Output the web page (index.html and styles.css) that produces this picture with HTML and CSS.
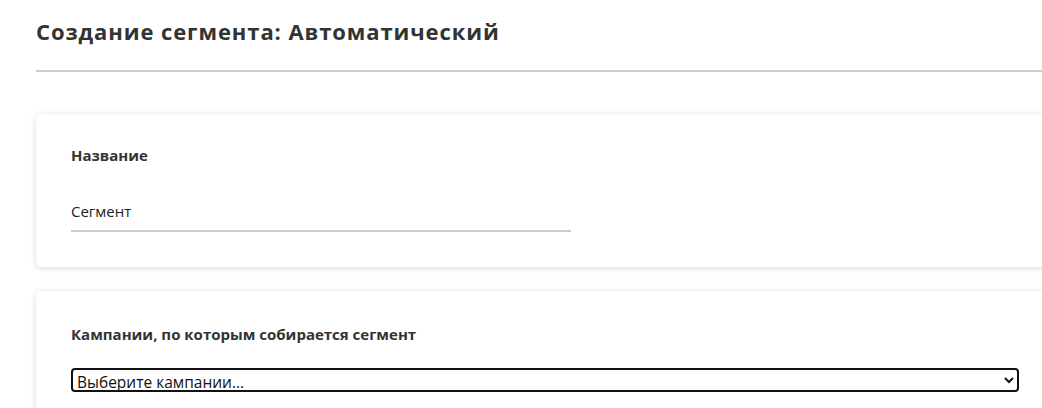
FILE: index.html
```html
<!DOCTYPE html>
<html lang="ru">
<head>
    <meta charset="UTF-8">
    <meta name="viewport" content="width=device-width, initial-scale=1.0">
    <title>Создание сегмента</title>
    <link rel="stylesheet" href="styles.css">
</head>
<body>
    <div class="page">
        <h1 class="page-title">Создание сегмента: Автоматический</h1>
        <hr class="divider">

        <!-- Название -->
        <div class="card">
            <div class="field-label">Название</div>
            <input class="text-input" type="text" value="Сегмент">
        </div>

        <!-- Кампании -->
        <div class="card card-campaigns">
            <div class="field-label">Кампании, по которым собирается сегмент</div>
            <select class="select-input">
                <option>Выберите кампании...</option>
            </select>
        </div>
    </div>
</body>
</html>
```

FILE: styles.css
```css
body {
    font-family: "Open Sans", Arial, sans-serif;
    margin: 0;
    padding: 0;
    overflow: hidden;
    background-color: white;
    color: #333;
}

.page {
    width: 1018px;
    padding: 0 0 0 36px;
}

.page-title {
    margin: 16px 0 0 0;
    font-size: 22px;
    line-height: 30px;
    font-weight: bold;
    letter-spacing: 0.9px;
    color: #333;
}

.divider {
    margin: 24px 0 42px 0;
    border: none;
    height: 2px;
    background: #cccccc;
}

.card {
    background: white;
    border-radius: 5px;
    box-shadow: 0 1px 6px rgba(0, 0, 0, 0.15);
    padding: 31px 35px 35px 35px;
    margin-bottom: 24px;
}

.card-campaigns {
    padding-top: 33px;
}

.field-label {
    font-size: 15px;
    line-height: 20px;
    font-weight: bold;
    color: #333;
}

.text-input {
    display: block;
    margin-top: 30px;
    width: 500px;
    box-sizing: border-box;
    border: none;
    border-bottom: 2px solid #cccccc;
    padding: 6px 0 9px 0;
    font-family: inherit;
    font-size: 15px;
    color: #222;
    outline: none;
}

.select-input {
    display: block;
    margin-top: 24px;
    width: 100%;
    height: 24px;
    border: 2px solid #111;
    border-radius: 4px;
    font-family: inherit;
    font-size: 15.5px;
    color: #111;
    background: white;
}
```
